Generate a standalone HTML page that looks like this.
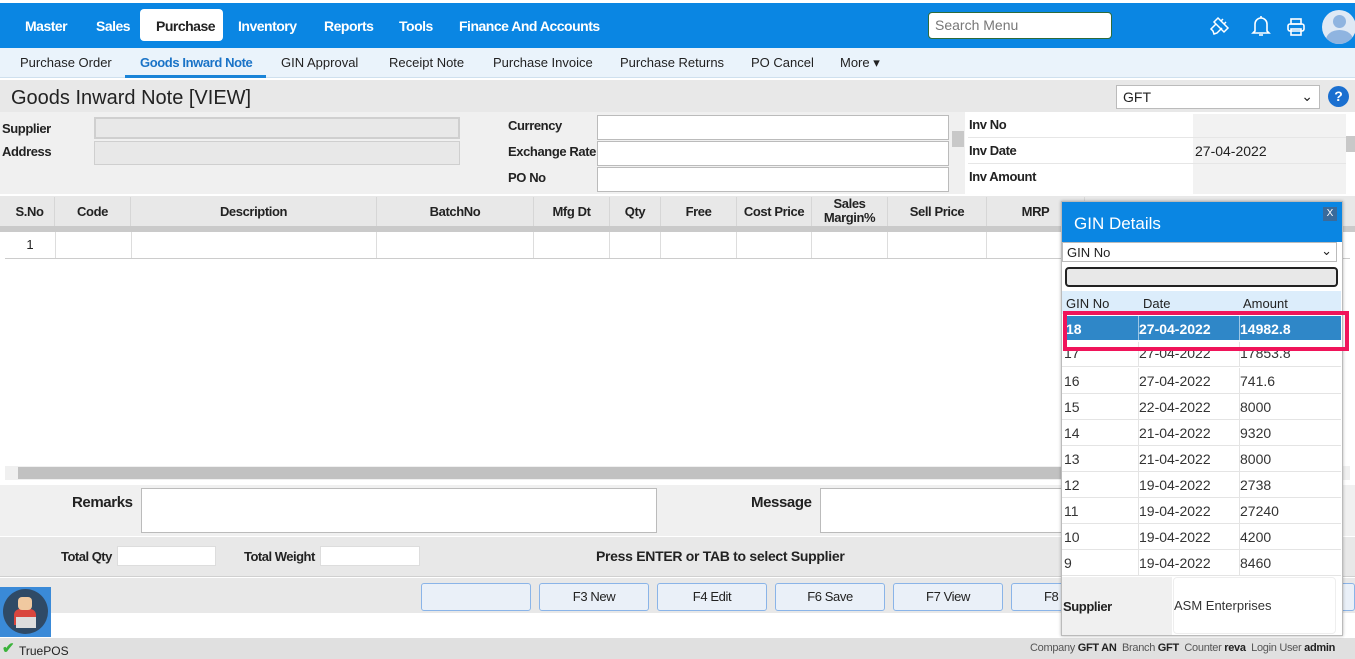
<!DOCTYPE html>
<html><head><meta charset="utf-8"><style>
*{box-sizing:border-box;margin:0;padding:0}
body{width:1355px;height:659px;overflow:hidden;position:relative;font-family:"Liberation Sans",sans-serif;font-size:13px;color:#222;background:#fff}
.a{position:absolute}
.nav{left:0;top:0;width:1355px;height:48px;background:#0a86e3;border-top:3px solid #fff}
.nav span{position:absolute;top:15px;color:#fff;font-weight:bold;font-size:14px;letter-spacing:-0.5px}
.sub{left:0;top:48px;width:1355px;height:30px;background:#eaf3fb;border-bottom:1px solid #cfe0ee}
.sub span{position:absolute;top:7px;font-size:13px;color:#222}
.inp{background:#fff;border:1px solid #bbb}
.th{position:absolute;top:197px;height:29px;font-weight:bold;font-size:13px;text-align:center;line-height:29px;border-right:1px solid #d6d6d6;letter-spacing:-0.4px}
.td{position:absolute;top:232px;height:26px;border-right:1px solid #ddd}
.btn{position:absolute;top:583px;width:110px;height:28px;background:#eaf0f8;border:1px solid #8ab4e8;border-radius:3px;text-align:center;line-height:26px;font-size:13px;letter-spacing:-0.4px}
.r{position:absolute;left:1062px;width:279px;height:26px;border-bottom:1px solid #e4e4e4;font-size:14px;color:#333}
.r span{position:absolute;top:5px}
.r i{position:absolute;top:0;height:26px;border-left:1px solid #e4e4e4}
</style></head><body>
<div class="a nav">
<span style="left:25px">Master</span><span style="left:96px">Sales</span>
<div class="a" style="left:140px;top:6px;width:83px;height:32px;background:#fff;border-radius:4px"></div>
<span style="left:156px;color:#222">Purchase</span>
<span style="left:238px">Inventory</span><span style="left:324px">Reports</span><span style="left:399px">Tools</span><span style="left:459px">Finance And Accounts</span>
<div class="a" style="left:928px;top:9px;width:184px;height:27px;background:#fff;border:1px solid #2e6b3a;border-radius:4px;color:#777;font-size:14px;padding:4px 6px;font-weight:normal">Search Menu</div>
<svg class="a" style="left:1208px;top:11px" width="24" height="24" viewBox="0 0 24 24" fill="none" stroke="#fff" stroke-width="1.5"><path d="M10 4l10 10-4 4-10-10zM8 10l-5 5 2 2 1 3 3-1 5-5M13 7l2-2M16 10l2-2"/></svg>
<svg class="a" style="left:1251px;top:11px" width="20" height="24" viewBox="0 0 20 24" fill="none" stroke="#fff" stroke-width="1.6"><path d="M4 17V10a6 6 0 0112 0v7l2 2H2zM8 21h4M10 2v2"/></svg>
<svg class="a" style="left:1286px;top:14px" width="20" height="20" viewBox="0 0 20 20" fill="none" stroke="#fff" stroke-width="1.6"><rect x="5" y="2" width="10" height="5"/><rect x="2" y="7" width="16" height="7" rx="2"/><rect x="5" y="12" width="10" height="6"/></svg>
<div class="a" style="left:1322px;top:7px;width:34px;height:34px;border-radius:50%;background:#dfe9f5;overflow:hidden"><div class="a" style="left:11px;top:5px;width:13px;height:13px;border-radius:50%;background:#8fb4e0"></div><div class="a" style="left:4px;top:20px;width:27px;height:20px;border-radius:50%;background:#8fb4e0"></div></div>
</div>
<div class="a sub">
<span style="left:20px">Purchase Order</span><span style="left:140px;color:#1a73c7;font-weight:bold;letter-spacing:-0.4px">Goods Inward Note</span>
<div class="a" style="left:125px;top:27px;width:141px;height:3px;background:#1a84d8"></div>
<span style="left:281px">GIN Approval</span><span style="left:389px">Receipt Note</span><span style="left:493px">Purchase Invoice</span><span style="left:620px">Purchase Returns</span><span style="left:751px">PO Cancel</span><span style="left:840px">More ▾</span>
</div>
<div class="a" style="left:0;top:80px;width:1355px;height:32px;background:#e8e8e8"></div>
<div class="a" style="left:11px;top:87px;font-size:20px;color:#222">Goods Inward Note [VIEW]</div>
<div class="a inp" style="left:1116px;top:85px;width:204px;height:24px;padding:3px 6px;font-size:14px">GFT<span style="position:absolute;right:6px;top:2px">⌄</span></div>
<div class="a" style="left:1328px;top:86px;width:21px;height:21px;border-radius:50%;background:#1a6fd0;color:#fff;font-weight:bold;text-align:center;line-height:21px;font-size:14px">?</div>
<div class="a" style="left:0;top:112px;width:965px;height:82px;background:#f0f0f0"></div>
<div class="a" style="left:2px;top:121px;font-weight:bold;letter-spacing:-0.4px">Supplier</div>
<div class="a" style="left:2px;top:144px;font-weight:bold;letter-spacing:-0.4px">Address</div>
<div class="a" style="left:94px;top:117px;width:366px;height:22px;background:#e8e8e8;border:2px solid #cfcfcf"></div>
<div class="a" style="left:94px;top:141px;width:366px;height:24px;background:#e8e8e8;border:1px solid #cfcfcf"></div>
<div class="a" style="left:508px;top:118px;font-weight:bold;letter-spacing:-0.4px">Currency</div>
<div class="a" style="left:508px;top:144px;font-weight:bold;letter-spacing:-0.4px">Exchange Rate</div>
<div class="a" style="left:508px;top:170px;font-weight:bold;letter-spacing:-0.4px">PO No</div>
<div class="a inp" style="left:597px;top:115px;width:352px;height:25px"></div>
<div class="a inp" style="left:597px;top:141px;width:352px;height:25px"></div>
<div class="a inp" style="left:597px;top:167px;width:352px;height:25px"></div>
<div class="a" style="left:952px;top:131px;width:12px;height:16px;background:#c8c8c8"></div>
<div class="a" style="left:968px;top:114px;width:225px;height:80px;background:#fff"></div>
<div class="a" style="left:1193px;top:114px;width:153px;height:80px;background:#f2f2f2"></div>
<div class="a" style="left:968px;top:137px;width:378px;height:1px;background:#e6e6e6"></div>
<div class="a" style="left:968px;top:163px;width:378px;height:1px;background:#e6e6e6"></div>
<div class="a" style="left:969px;top:117px;font-weight:bold;letter-spacing:-0.4px">Inv No</div>
<div class="a" style="left:969px;top:143px;font-weight:bold;letter-spacing:-0.4px">Inv Date</div>
<div class="a" style="left:969px;top:169px;font-weight:bold;letter-spacing:-0.4px">Inv Amount</div>
<div class="a" style="left:1195px;top:143px;font-size:14px">27-04-2022</div>
<div class="a" style="left:1346px;top:136px;width:9px;height:16px;background:#c8c8c8"></div>
<div class="a" style="left:0;top:196px;width:1355px;height:30px;background:#e8e8e8"></div>
<div class="th" style="left:5px;width:50px">S.No</div><div class="th" style="left:55px;width:76px">Code</div><div class="th" style="left:131px;width:246px">Description</div><div class="th" style="left:377px;width:157px">BatchNo</div><div class="th" style="left:534px;width:76px">Mfg Dt</div><div class="th" style="left:610px;width:51px">Qty</div><div class="th" style="left:661px;width:76px">Free</div><div class="th" style="left:737px;width:75px">Cost Price</div><div class="th" style="left:812px;width:76px;line-height:14px;padding-top:0">Sales<br>Margin%</div><div class="th" style="left:888px;width:99px">Sell Price</div><div class="th" style="left:987px;width:98px">MRP</div>
<div class="a" style="left:0;top:226px;width:1355px;height:6px;background:#cacaca"></div>
<div class="a" style="left:5px;top:258px;width:1345px;height:1px;background:#ccc"></div>
<div class="td" style="left:5px;width:51px;text-align:center;line-height:26px">1</div><div class="td" style="left:56px;width:76px"></div><div class="td" style="left:132px;width:245px"></div><div class="td" style="left:377px;width:157px"></div><div class="td" style="left:534px;width:76px"></div><div class="td" style="left:610px;width:51px"></div><div class="td" style="left:661px;width:76px"></div><div class="td" style="left:737px;width:75px"></div><div class="td" style="left:812px;width:76px"></div><div class="td" style="left:888px;width:99px"></div><div class="td" style="left:987px;width:98px"></div>
<div class="a" style="left:5px;top:466px;width:1345px;height:14px;background:#f0f0f0"></div>
<div class="a" style="left:18px;top:467px;width:1320px;height:12px;background:#c1c1c1"></div>
<div class="a" style="left:0;top:485px;width:1355px;height:51px;background:#f0f0f0"></div>
<div class="a" style="left:72px;top:494px;font-weight:bold;font-size:15px;letter-spacing:-0.4px">Remarks</div>
<div class="a inp" style="left:141px;top:488px;width:516px;height:45px"></div>
<div class="a" style="left:751px;top:494px;font-weight:bold;font-size:15px;letter-spacing:-0.4px">Message</div>
<div class="a inp" style="left:820px;top:488px;width:250px;height:45px"></div>
<div class="a" style="left:0;top:537px;width:1355px;height:40px;background:#e8e8e8;border-bottom:1px solid #d0d0d0"></div>
<div class="a" style="left:61px;top:549px;font-weight:bold;letter-spacing:-0.5px">Total Qty</div>
<div class="a inp" style="left:117px;top:546px;width:99px;height:20px;border-color:#ddd"></div>
<div class="a" style="left:244px;top:549px;font-weight:bold;letter-spacing:-0.5px">Total Weight</div>
<div class="a inp" style="left:320px;top:546px;width:100px;height:20px;border-color:#ddd"></div>
<div class="a" style="left:596px;top:548px;font-weight:bold;font-size:14px;letter-spacing:-0.3px">Press ENTER or TAB to select Supplier</div>
<div class="a" style="left:0;top:578px;width:1355px;height:35px;background:#e8e8e8"></div>
<div class="btn" style="left:421px"></div><div class="btn" style="left:539px">F3 New</div><div class="btn" style="left:657px">F4 Edit</div><div class="btn" style="left:775px">F6 Save</div><div class="btn" style="left:893px">F7 View</div><div class="btn" style="left:1011px;width:344px;text-align:left;padding-left:32px">F8</div>
<div class="a" style="left:0;top:587px;width:51px;height:50px;background:#3a8ad8"><div class="a" style="left:3px;top:2px;width:45px;height:45px;border-radius:50%;background:#2f4a66"></div><div class="a" style="left:14px;top:22px;width:22px;height:16px;background:#d9463e;border-radius:6px 6px 0 0"></div><div class="a" style="left:18px;top:10px;width:14px;height:13px;background:#f0c9a0;border-radius:4px"></div><div class="a" style="left:16px;top:30px;width:20px;height:11px;background:#ddd"></div></div>
<div class="a" style="left:0;top:638px;width:1355px;height:21px;background:#e0e0e0"></div>
<div class="a" style="left:2px;top:639px;color:#3bb33b;font-size:15px;font-weight:bold">✔</div>
<div class="a" style="left:19px;top:644px;font-size:12px">TruePOS</div>
<div class="a" style="left:1030px;top:642px;font-size:11px;color:#555;letter-spacing:-0.3px;white-space:nowrap">Company <b style="color:#222">GFT AN</b> &nbsp;Branch <b style="color:#222">GFT</b> &nbsp;Counter <b style="color:#222">reva</b> &nbsp;Login User <b style="color:#222">admin</b></div>
<!-- popup -->
<div class="a" style="left:1061px;top:201px;width:282px;height:435px;background:#fff;border:1px solid #bbb;box-shadow:0 0 3px rgba(0,0,0,.3)"></div>
<div class="a" style="left:1062px;top:202px;width:280px;height:40px;background:#0a86e3;color:#fff;font-size:17px;padding:12px 12px">GIN Details</div>
<div class="a" style="left:1323px;top:207px;width:14px;height:14px;background:#3a6a9a;color:#fff;font-size:10px;text-align:center;line-height:14px">X</div>
<div class="a inp" style="left:1062px;top:242px;width:275px;height:20px;padding:2px 4px;font-size:13px">GIN No<span style="position:absolute;right:4px;top:0">⌄</span></div>
<div class="a" style="left:1065px;top:267px;width:273px;height:20px;background:#e8e8e8;border:2px solid #222;border-radius:4px"></div>
<div class="a" style="left:1062px;top:291px;width:279px;height:23px;background:#dcedfb"></div>
<div class="a" style="left:1066px;top:296px;font-size:13px">GIN No</div><div class="a" style="left:1143px;top:296px;font-size:13px">Date</div><div class="a" style="left:1243px;top:296px;font-size:13px">Amount</div>
<div class="r" style="top:342px;height:25px;overflow:hidden"><span style="left:2px;top:3px">17</span><span style="left:77px;top:3px">27-04-2022</span><span style="left:178px;top:3px">17853.8</span><i style="left:76px"></i><i style="left:177px"></i></div>
<div class="a" style="left:1066px;top:316px;width:275px;height:24px;background:#2f87c8;color:#fff;font-weight:bold;font-size:14px"><span class="a" style="left:0;top:5px">18</span><span class="a" style="left:73px;top:5px">27-04-2022</span><span class="a" style="left:174px;top:5px">14982.8</span><i class="a" style="left:72px;top:0;height:24px;border-left:1px solid #9cc6e6"></i><i class="a" style="left:173px;top:0;height:24px;border-left:1px solid #9cc6e6"></i></div>
<div class="a" style="left:1063px;top:311px;width:286px;height:40px;border:4px solid #f0145a"></div>
<div class="r" style="top:368px"><span style="left:2px">16</span><span style="left:77px">27-04-2022</span><span style="left:178px">741.6</span><i style="left:76px"></i><i style="left:177px"></i></div>
<div class="r" style="top:394px"><span style="left:2px">15</span><span style="left:77px">22-04-2022</span><span style="left:178px">8000</span><i style="left:76px"></i><i style="left:177px"></i></div>
<div class="r" style="top:420px"><span style="left:2px">14</span><span style="left:77px">21-04-2022</span><span style="left:178px">9320</span><i style="left:76px"></i><i style="left:177px"></i></div>
<div class="r" style="top:446px"><span style="left:2px">13</span><span style="left:77px">21-04-2022</span><span style="left:178px">8000</span><i style="left:76px"></i><i style="left:177px"></i></div>
<div class="r" style="top:472px"><span style="left:2px">12</span><span style="left:77px">19-04-2022</span><span style="left:178px">2738</span><i style="left:76px"></i><i style="left:177px"></i></div>
<div class="r" style="top:498px"><span style="left:2px">11</span><span style="left:77px">19-04-2022</span><span style="left:178px">27240</span><i style="left:76px"></i><i style="left:177px"></i></div>
<div class="r" style="top:524px"><span style="left:2px">10</span><span style="left:77px">19-04-2022</span><span style="left:178px">4200</span><i style="left:76px"></i><i style="left:177px"></i></div>
<div class="r" style="top:550px"><span style="left:2px">9</span><span style="left:77px">19-04-2022</span><span style="left:178px">8460</span><i style="left:76px"></i><i style="left:177px"></i></div>
<div class="a" style="left:1062px;top:577px;width:110px;height:58px;background:#f0f0f0"></div>
<div class="a" style="left:1063px;top:599px;font-weight:bold;letter-spacing:-0.4px">Supplier</div>
<div class="a" style="left:1173px;top:577px;width:163px;height:57px;background:#fff;border-radius:4px;border:1px solid #eee"></div>
<div class="a" style="left:1174px;top:598px;font-size:13px;color:#333">ASM Enterprises</div>
</body></html>
